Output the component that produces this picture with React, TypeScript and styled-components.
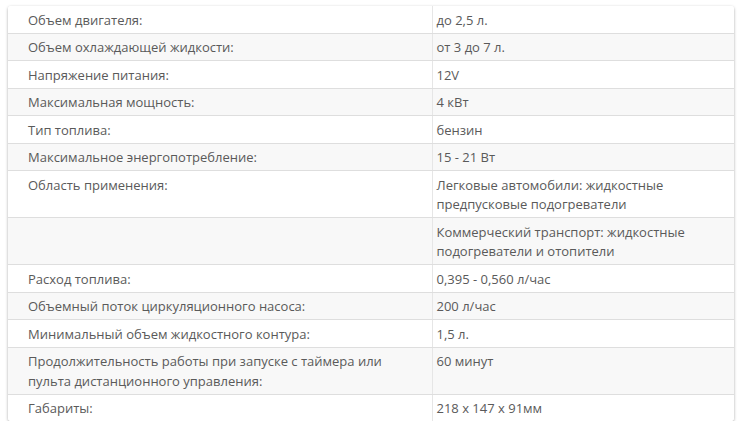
import React from "react";
import styled, { createGlobalStyle } from "styled-components";

const Global = createGlobalStyle`
    body{
        margin: 0;
        background: #fff;
        font-family: "Open Sans", "DejaVu Sans", sans-serif;
    }
`

const Card = styled.div`
    margin: 6px 7px 0 8px;
    border-radius: 3px;
    box-shadow: 0 1px 3px rgba(0,0,0,0.35);
    overflow: hidden;
    background: #fff;
`

const Table = styled.table`
    width: 100%;
    table-layout: fixed;
    border-collapse: collapse;
    font-size: 13px;
    line-height: 19.5px;
    color: #5a5a5a;

    tr:last-child td{
        border-bottom: none;
    }
`

const Row = styled.tr<{ $striped: boolean }>`
    background: ${p => (p.$striped ? "#f8f8f8" : "#fff")};
`

const Name = styled.td`
    padding: 4.5px 8px 2.5px 20px;
    vertical-align: top;
    border-right: 1px solid #e6e6e6;
    border-bottom: 1px solid #dedede;
`

const Value = styled.td`
    padding: 4.5px 8px 2.5px 4px;
    vertical-align: top;
    border-bottom: 1px solid #dedede;
`

const specs: [string, string][] = [
    ["Объем двигателя:", "до 2,5 л."],
    ["Объем охлаждающей жидкости:", "от 3 до 7 л."],
    ["Напряжение питания:", "12V"],
    ["Максимальная мощность:", "4 кВт"],
    ["Тип топлива:", "бензин"],
    ["Максимальное энергопотребление:", "15 - 21 Вт"],
    ["Область применения:", "Легковые автомобили: жидкостные предпусковые подогреватели"],
    ["", "Коммерческий транспорт: жидкостные подогреватели и отопители"],
    ["Расход топлива:", "0,395 - 0,560 л/час"],
    ["Объемный поток циркуляционного насоса:", "200 л/час"],
    ["Минимальный объем жидкостного контура:", "1,5 л."],
    ["Продолжительность работы при запуске с таймера или пульта дистанционного управления:", "60 минут"],
    ["Габариты:", "218 x 147 x 91мм"],
]

export default function App() {
    return(
        <>
        <Global/>
        <Card>
            <Table>
                <colgroup>
                    <col style={{ width: 424 }}/>
                    <col/>
                </colgroup>
                <tbody>
                    {specs.map(([name, value], i) => (
                        <Row key={i} $striped={i % 2 === 1}>
                            <Name>{name}</Name>
                            <Value>{value}</Value>
                        </Row>
                    ))}
                </tbody>
            </Table>
        </Card>
        </>
    );
}
